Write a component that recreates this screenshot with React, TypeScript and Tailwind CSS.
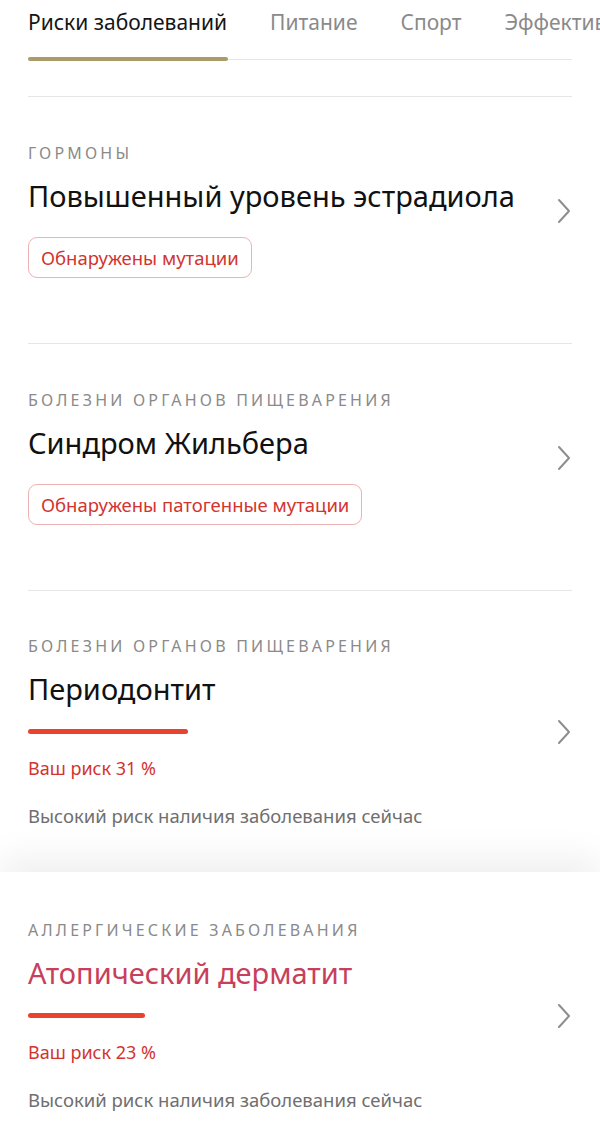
type Item = {
  category: string;
  title: string;
  titleAccent?: boolean;
  badge?: string;
  risk?: number;
  barWidth?: number;
  note?: string;
};

const items: Item[] = [
  { category: "Гормоны", title: "Повышенный уровень эстрадиола", badge: "Обнаружены мутации" },
  { category: "Болезни органов пищеварения", title: "Синдром Жильбера", badge: "Обнаружены патогенные мутации" },
  {
    category: "Болезни органов пищеварения",
    title: "Периодонтит",
    risk: 31,
    barWidth: 160,
    note: "Высокий риск наличия заболевания сейчас",
  },
];

const featured: Item = {
  category: "Аллергические заболевания",
  title: "Атопический дерматит",
  titleAccent: true,
  risk: 23,
  barWidth: 117,
  note: "Высокий риск наличия заболевания сейчас",
};

const tabs = ["Риски заболеваний", "Питание", "Спорт", "Эффективность лекарств"];

function Chevron() {
  return (
    <svg width="14" height="26" viewBox="0 0 14 26" fill="none" className="shrink-0">
      <path d="M2 2l10 11L2 24" stroke="#8e8e8e" strokeWidth="2" strokeLinecap="round" strokeLinejoin="round" />
    </svg>
  );
}

function Card({ item }: { item: Item }) {
  return (
    <div className="flex items-center justify-between">
      <div className="flex flex-col">
        <div className="text-[16px] leading-[20px] uppercase tracking-[0.2em] text-[#8a8a8a]">{item.category}</div>
        <div className={`mt-[15px] text-[29px] leading-[36px] ${item.titleAccent ? "text-[#c7405b]" : "text-[#111111]"}`}>
          {item.title}
        </div>
        {item.badge && (
          <div className="mt-[23px] self-start h-[41px] px-[12px] flex items-center rounded-[9px] border border-[#eeb2b2] text-[18.5px] text-[#d3342f]">
            {item.badge}
          </div>
        )}
        {item.risk !== undefined && (
          <>
            <div className="mt-[22px] h-[5px] rounded-full bg-[#e8432f]" style={{ width: item.barWidth }} />
            <div className="mt-[22px] text-[18px] leading-[25px] text-[#d3342f]">Ваш риск {item.risk} %</div>
            <div className="mt-[22px] text-[18.5px] leading-[25px] text-[#6f6f6f]">{item.note}</div>
          </>
        )}
      </div>
      <div className="mr-[1px]">
        <Chevron />
      </div>
    </div>
  );
}

export default function App() {
  return (
    <div className="bg-white min-h-screen overflow-hidden" style={{ fontFamily: "'Noto Sans', 'Open Sans', sans-serif" }}>
      <div className="pl-[28px] overflow-hidden">
        <div className="flex gap-[43px] whitespace-nowrap pt-[8px] h-[57px]">
          {tabs.map((t, i) => (
            <div key={t} className={`text-[21px] leading-[28px] ${i === 0 ? "text-[#151515]" : "text-[#8a8a8a]"}`}>
              {t}
            </div>
          ))}
        </div>
      </div>
      <div className="mx-[28px] relative h-[4px]">
        <div className="absolute left-0 right-0 top-[2px] h-[1px] bg-[#e6e6e6]" />
        <div className="absolute left-0 top-0 h-[4px] w-[200px] rounded-full bg-[#ab9b68]" />
      </div>
      <div className="mx-[28px] mt-[35px] border-t border-[#e6e6e6]" />

      <div className="px-[28px]">
        {items.map((item, i) => (
          <div key={item.title} className={i > 0 ? "border-t border-[#e6e6e6]" : ""}>
            <div className={i === items.length - 1 ? "pt-[45px] pb-[44px]" : "pt-[46px] pb-[65px]"}>
              <Card item={item} />
            </div>
          </div>
        ))}
      </div>

      <div className="relative bg-white px-[28px] pt-[48px] pb-[60px] shadow-[0_-12px_36px_rgba(0,0,0,0.07)]">
        <Card item={featured} />
      </div>
    </div>
  );
}
